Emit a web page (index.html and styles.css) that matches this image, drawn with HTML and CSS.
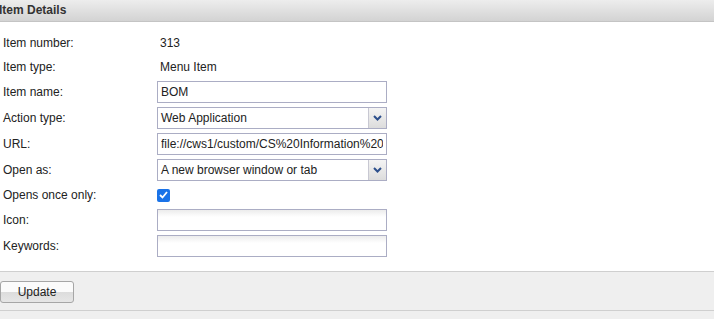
FILE: index.html
```html
<!DOCTYPE html>
<html lang="en">
<head>
    <meta charset="UTF-8">
    <title>Item Details</title>
    <link rel="stylesheet" href="styles.css">
</head>
<body>
    <div class="panel-header">Item Details</div>

    <div class="panel-body">
        <div class="form-row">
            <label>Item number:</label>
            <span class="value">313</span>
        </div>
        <div class="form-row">
            <label>Item type:</label>
            <span class="value">Menu Item</span>
        </div>
        <div class="form-row">
            <label for="item-name">Item name:</label>
            <input type="text" id="item-name" class="field" value="BOM">
        </div>
        <div class="form-row">
            <label>Action type:</label>
            <div class="combo">
                <span class="combo-text">Web Application</span>
                <span class="combo-btn">
                    <svg width="9" height="6" viewBox="0 0 9 6"><path d="M1 1 L4.5 4.5 L8 1" fill="none" stroke="#2c4f8c" stroke-width="2"/></svg>
                </span>
            </div>
        </div>
        <div class="form-row">
            <label for="item-url">URL:</label>
            <input type="text" id="item-url" class="field" value="file://cws1/custom/CS%20Information%20Sheets/BOM.htm">
        </div>
        <div class="form-row">
            <label>Open as:</label>
            <div class="combo">
                <span class="combo-text">A new browser window or tab</span>
                <span class="combo-btn">
                    <svg width="9" height="6" viewBox="0 0 9 6"><path d="M1 1 L4.5 4.5 L8 1" fill="none" stroke="#2c4f8c" stroke-width="2"/></svg>
                </span>
            </div>
        </div>
        <div class="form-row">
            <label>Opens once only:</label>
            <span class="check">
                <svg width="9" height="8" viewBox="0 0 9 8"><path d="M1 4 L3.5 6.5 L8 1" fill="none" stroke="#fff" stroke-width="1.8"/></svg>
            </span>
        </div>
        <div class="form-row">
            <label for="item-icon">Icon:</label>
            <input type="text" id="item-icon" class="field shaded">
        </div>
        <div class="form-row">
            <label for="item-keywords">Keywords:</label>
            <input type="text" id="item-keywords" class="field shaded">
        </div>
    </div>

    <div class="panel-footer">
        <button class="btn">Update</button>
    </div>
    <div class="panel-bottom"></div>
</body>
</html>
```

FILE: styles.css
```css
body {
    margin: 0;
    font-family: "Liberation Sans", Arial, sans-serif;
    font-size: 12px;
    color: #222;
    background: #fff;
    overflow: hidden;
}
.panel-header {
    height: 21px;
    line-height: 21px;
    text-indent: -1px;
    font-weight: bold;
    color: #333;
    background: linear-gradient(#ededed, #d3d3d3);
    border-bottom: 1px solid #c4c4c4;
}
.panel-body {
    padding: 11px 0 14px 0;
    display: flex;
    flex-direction: column;
    gap: 4px;
}
.form-row {
    display: flex;
    align-items: center;
    min-height: 20px;
}
.form-row label {
    width: 157px;
    padding-left: 3px;
    box-sizing: border-box;
    flex-shrink: 0;
}
.value {
    padding-left: 3px;
}
.field {
    width: 230px;
    height: 22px;
    box-sizing: border-box;
    border: 1px solid #abadc4;
    padding: 0 3px;
    font: inherit;
    color: #222;
    outline: none;
    background: #fff;
}
.field.shaded {
    background: linear-gradient(#ececec, #fff 7px);
}
.combo {
    width: 230px;
    height: 22px;
    box-sizing: border-box;
    border: 1px solid #abadc4;
    display: flex;
    background: #fff;
}
.combo-text {
    flex: 1;
    padding-left: 3px;
    line-height: 20px;
}
.combo-btn {
    width: 17px;
    border-left: 1px solid #c8c8d2;
    background: linear-gradient(#f4f4f4, #dcdcdc);
    display: flex;
    align-items: center;
    justify-content: center;
}
.check {
    width: 13px;
    height: 13px;
    border-radius: 2px;
    background: #1a73e8;
    display: flex;
    align-items: center;
    justify-content: center;
}
.panel-footer {
    height: 38px;
    background: #efefef;
    border-top: 1px solid #cfcfcf;
    border-bottom: 1px solid #cfcfcf;
    display: flex;
    align-items: center;
}
.btn {
    width: 74px;
    height: 22px;
    margin-top: 1px;
    font: inherit;
    color: #222;
    border: 1px solid #a6a6a6;
    border-radius: 3px;
    background: linear-gradient(#fbfbfb 50%, #dcdcdc 50%, #e6e6e6);
    padding: 0;
}
.panel-bottom {
    height: 20px;
    background: #efefef;
}
```
